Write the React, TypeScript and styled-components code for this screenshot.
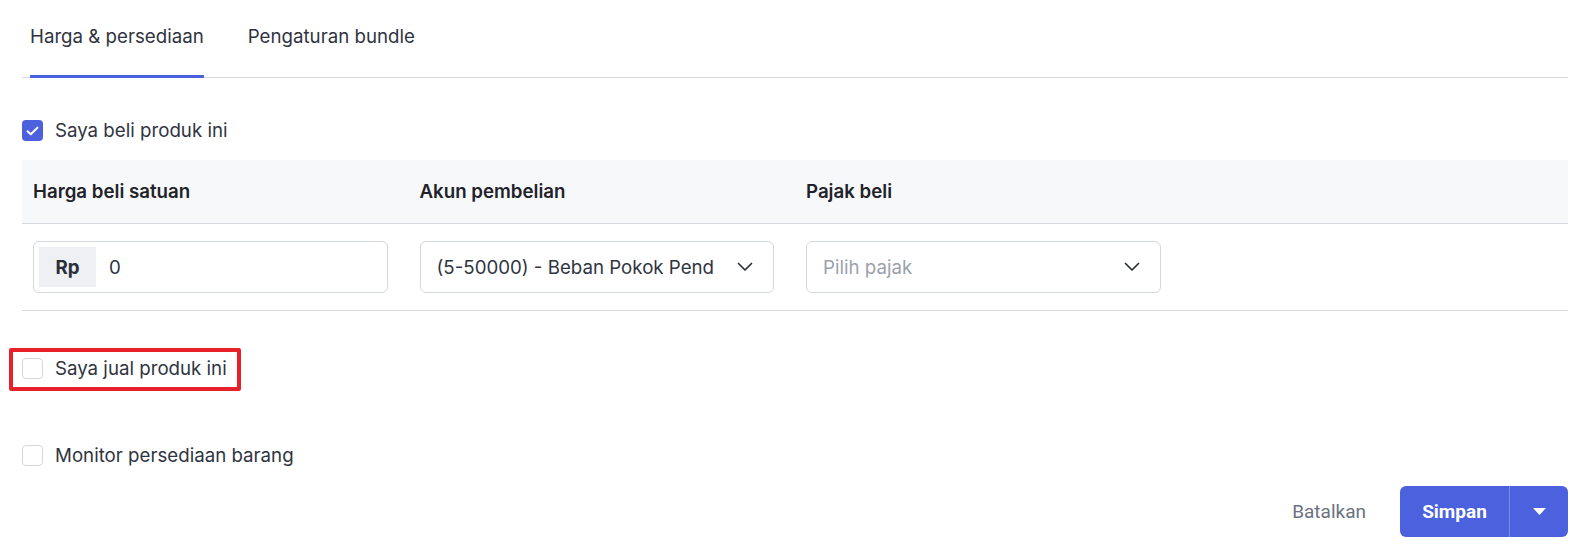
import React from "react";
import styled, { createGlobalStyle } from "styled-components";

const Global = createGlobalStyle`
  html, body { margin: 0; padding: 0; background: #ffffff; }
  body { font-family: Inter, "Noto Sans", sans-serif; color: #2d3340; }
  * { box-sizing: border-box; }
`;

const Page = styled.div`
  width: 1596px;
  height: 558px;
  padding: 0 28px 0 22px;
  display: flex;
  flex-direction: column;
`;

const TabBar = styled.div`
  display: flex;
  gap: 44px;
  padding-left: 8px;
  height: 78px;
  border-bottom: 1px solid #d6d9df;
`;

const Tab = styled.div<{ $active?: boolean }>`
  display: flex;
  align-items: center;
  font-size: 18.7px;
  color: #2f3441;
  padding-bottom: 2px;
  border-bottom: 3px solid ${(p) => (p.$active ? "#4b61dd" : "transparent")};
  margin-bottom: -1px;
`;

const CheckRow = styled.label<{ $mt: number }>`
  position: relative;
  display: flex;
  align-items: center;
  gap: 12px;
  margin-top: ${(p) => p.$mt}px;
  height: 21px;
  font-size: 18.7px;
  color: #2f3441;
  align-self: flex-start;
`;

const Box = styled.span<{ $checked?: boolean }>`
  width: 21px;
  height: 21px;
  border-radius: 4px;
  display: flex;
  align-items: center;
  justify-content: center;
  background: ${(p) => (p.$checked ? "#4b61dd" : "#ffffff")};
  border: ${(p) => (p.$checked ? "none" : "1.5px solid #d3d7de")};
`;

const Highlight = styled.span`
  position: absolute;
  left: -13px;
  top: -10px;
  width: 232px;
  height: 43px;
  border: 4px solid #e8202a;
  border-radius: 2px;
  pointer-events: none;
`;

const Table = styled.div`
  margin-top: 19px;
  display: flex;
  flex-direction: column;
`;

const HeaderRow = styled.div`
  display: grid;
  grid-template-columns: repeat(4, 1fr);
  height: 64px;
  background: #f7f8fa;
  border-bottom: 1px solid #d4d8df;
`;

const HeaderCell = styled.div`
  display: flex;
  align-items: center;
  padding: 0 22px 0 11px;
  font-size: 18.7px;
  font-weight: 600;
  color: #1f2329;
`;

const BodyRow = styled.div`
  display: grid;
  grid-template-columns: repeat(4, 1fr);
  height: 87px;
  align-items: center;
  border-bottom: 1px solid #d6d9df;
`;

const Cell = styled.div`
  padding: 0 21px 0 11px;
`;

const Field = styled.div`
  height: 52px;
  border: 1px solid #d3d7de;
  border-radius: 6px;
  display: flex;
  align-items: center;
  background: #fff;
`;

const Addon = styled.span`
  margin-left: 5px;
  width: 57px;
  height: 40px;
  background: #eef0f3;
  display: flex;
  align-items: center;
  justify-content: center;
  font-size: 18.7px;
  font-weight: 700;
  color: #2a2f3a;
`;

const FieldText = styled.span<{ $placeholder?: boolean }>`
  flex: 1;
  font-size: 18.7px;
  color: ${(p) => (p.$placeholder ? "#9aa1ad" : "#2f3441")};
  white-space: nowrap;
  overflow: hidden;
`;

const ValueText = styled(FieldText)`
  padding-left: 13px;
`;

const SelectText = styled(FieldText)`
  padding-left: 16px;
`;

const Chevron = styled.span`
  display: flex;
  margin-right: 20px;
  margin-left: 8px;
  color: #2a2f3a;
`;

const Footer = styled.div`
  margin-top: 20px;
  display: flex;
  justify-content: flex-end;
  align-items: center;
  gap: 18px;
`;

const CancelButton = styled.button`
  border: none;
  background: transparent;
  font-family: Roboto, "Liberation Sans", sans-serif;
  font-size: 19px;
  color: #6b7280;
  padding: 0 16px;
  height: 51px;
`;

const SplitButton = styled.div`
  display: flex;
  height: 51px;
  border-radius: 6px;
  overflow: hidden;
  background: #4b61dd;
`;

const MainButton = styled.button`
  border: none;
  background: transparent;
  color: #ffffff;
  font-family: Roboto, "Liberation Sans", sans-serif;
  font-weight: 700;
  font-size: 19px;
  width: 110px;
  padding: 0;
  border-right: 1px solid #7d8ce8;
`;

const CaretButton = styled.button`
  border: none;
  background: transparent;
  width: 58px;
  padding: 0;
  display: flex;
  align-items: center;
  justify-content: center;
`;

const ChevronDown = () => (
  <svg width="16" height="10" viewBox="0 0 16 10" fill="none">
    <path d="M1.5 1.5 L8 8 L14.5 1.5" stroke="currentColor" strokeWidth="1.7" strokeLinecap="round" strokeLinejoin="round" />
  </svg>
);

const Check = () => (
  <svg width="13" height="10" viewBox="0 0 13 10" fill="none">
    <path d="M1.5 5.2 L4.8 8.3 L11.5 1.6" stroke="#fff" strokeWidth="2" strokeLinecap="round" strokeLinejoin="round" />
  </svg>
);

export default function App() {
  return (
    <>
      <Global />
      <Page>
        <TabBar>
          <Tab $active>Harga &amp; persediaan</Tab>
          <Tab>Pengaturan bundle</Tab>
        </TabBar>

        <CheckRow $mt={42}>
          <Box $checked>
            <Check />
          </Box>
          Saya beli produk ini
        </CheckRow>

        <Table>
          <HeaderRow>
            <HeaderCell>Harga beli satuan</HeaderCell>
            <HeaderCell>Akun pembelian</HeaderCell>
            <HeaderCell>Pajak beli</HeaderCell>
            <HeaderCell />
          </HeaderRow>
          <BodyRow>
            <Cell>
              <Field>
                <Addon>Rp</Addon>
                <ValueText>0</ValueText>
              </Field>
            </Cell>
            <Cell>
              <Field>
                <SelectText>(5-50000) - Beban Pokok Pend</SelectText>
                <Chevron>
                  <ChevronDown />
                </Chevron>
              </Field>
            </Cell>
            <Cell>
              <Field>
                <SelectText $placeholder>Pilih pajak</SelectText>
                <Chevron>
                  <ChevronDown />
                </Chevron>
              </Field>
            </Cell>
            <Cell />
          </BodyRow>
        </Table>

        <CheckRow $mt={47}>
          <Highlight />
          <Box />
          Saya jual produk ini
        </CheckRow>

        <CheckRow $mt={66}>
          <Box />
          Monitor persediaan barang
        </CheckRow>

        <Footer>
          <CancelButton>Batalkan</CancelButton>
          <SplitButton>
            <MainButton>Simpan</MainButton>
            <CaretButton>
              <svg width="13" height="7" viewBox="0 0 13 7">
                <path d="M0 0 L13 0 L6.5 7 Z" fill="#ffffff" />
              </svg>
            </CaretButton>
          </SplitButton>
        </Footer>
      </Page>
    </>
  );
}
